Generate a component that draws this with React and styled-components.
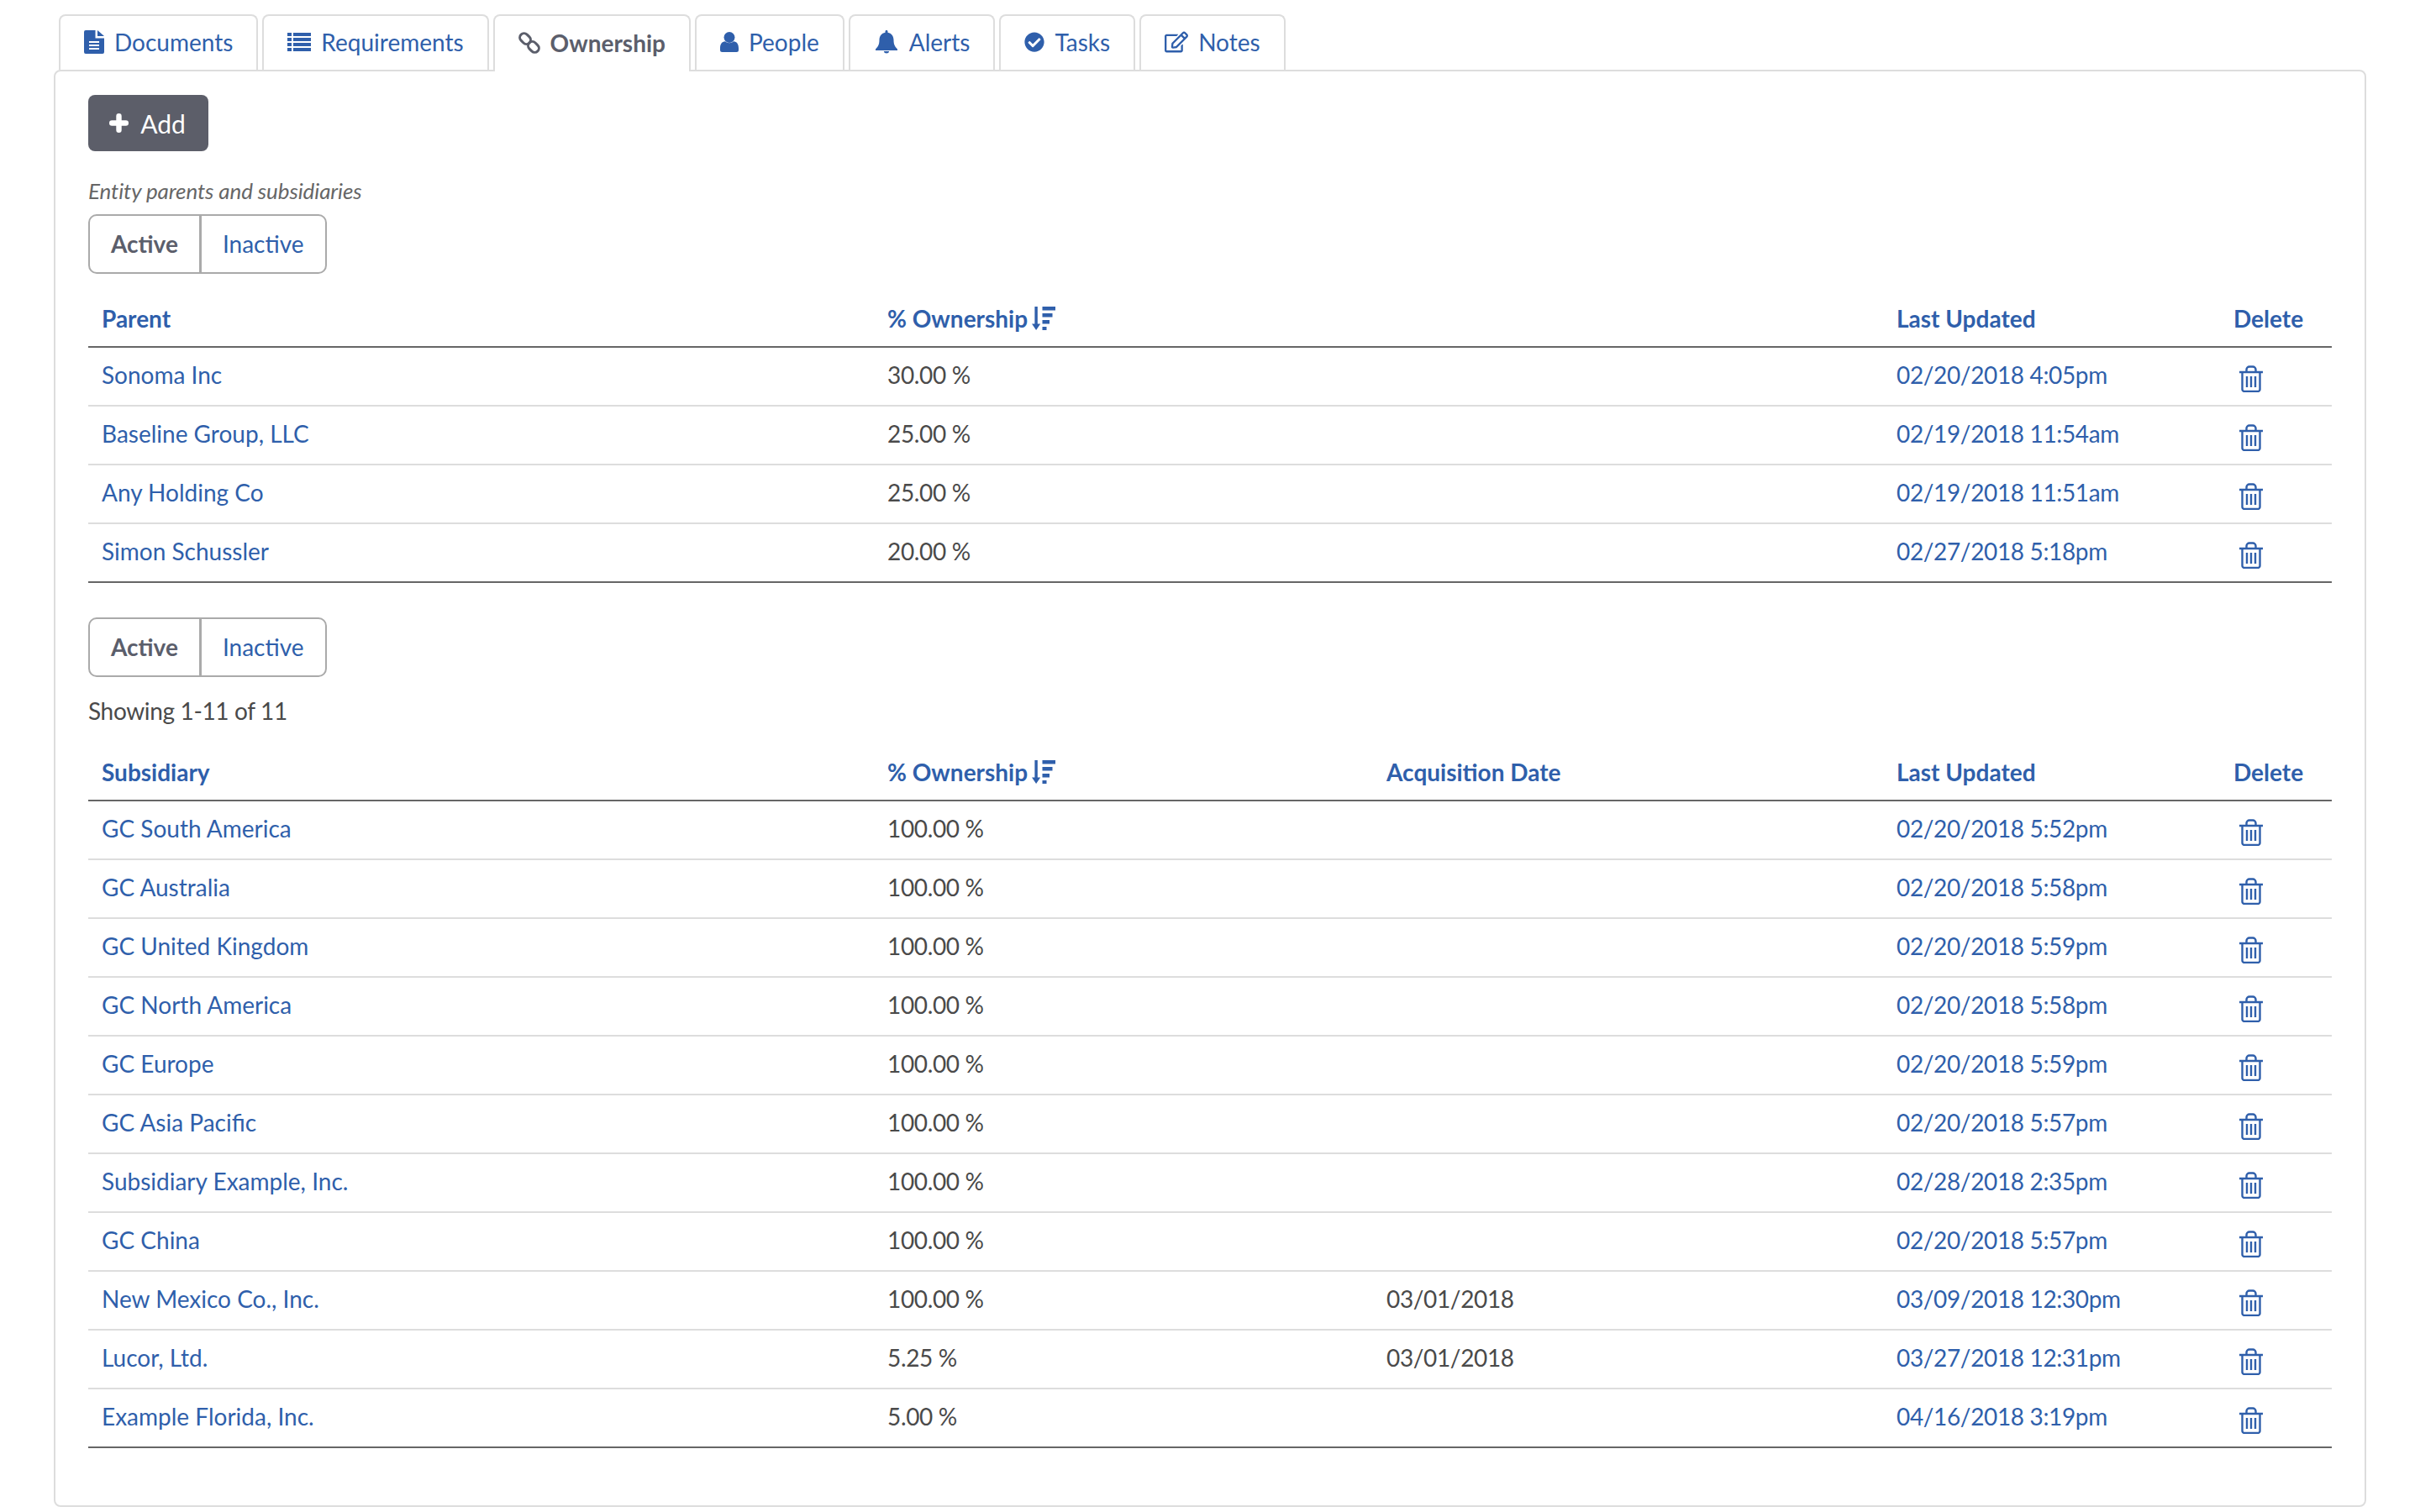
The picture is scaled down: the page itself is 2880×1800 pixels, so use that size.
import React from 'react';
import styled, { createGlobalStyle } from 'styled-components';
import { FaCheckCircle, FaRegEdit } from 'react-icons/fa';

const BLUE = '#2f5fab';
const GREY = '#5b5e6b';
const Global = createGlobalStyle`
  html, body { margin: 0; padding: 0; background: #fff; }
  body { font-family: Lato, "Noto Sans", sans-serif; font-size: 28px; color: #4a4a4a; }
`;
const Page = styled.div`
  width: 2880px; height: 1800px; box-sizing: border-box; padding: 17px 0 0 64px; overflow: hidden;
`;
const TabBar = styled.div`
  display: flex; align-items: flex-start; gap: 5px; padding-left: 6px; height: 66px; position: relative; z-index: 1;
`;
const Tab = styled.div`
  display: flex; align-items: center; gap: 12px; box-sizing: border-box; height: ${p => p.$active ? 68 : 66}px;
  padding: 0 28px 2px; border: 2px solid #ddd; border-bottom: 0;
  border-radius: 8px 8px 0 0; background: #fff; color: ${p => p.$active ? GREY : BLUE};
  font-weight: ${p => p.$active ? 700 : 400}; font-size: 28px;
  svg { display: block; flex: none; }
`;
const Panel = styled.div`
  box-sizing: border-box; width: 2752px; height: 1711px; border: 2px solid #ddd;
  border-radius: 8px; padding: 28px 39px 0 39px;
`;
const AddButton = styled.button`
  display: flex; align-items: center; gap: 14px; box-sizing: border-box; width: 143px; height: 67px;
  justify-content: center; background: #5c5e69; color: #fff; border: 0; border-radius: 8px; padding: 0 2px 0 0;
  font: 400 30px Lato, sans-serif;
`;
const Caption = styled.div`
  font-style: italic; font-size: 26px; letter-spacing: -0.1px; color: #666; line-height: 36px; margin-top: 29px;
`;
const Pills = styled.div`
  display: flex; width: fit-content; box-sizing: border-box; height: 71px; border: 2px solid #aaa; border-radius: 10px; overflow: hidden;
  margin-top: ${p => p.$top}px;
`;
const Pill = styled.div`
  display: flex; align-items: center; padding: 0 25px 2px; font-size: 28px;
  color: ${p => p.$active ? GREY : BLUE}; font-weight: ${p => p.$active ? 700 : 400};
  & + & { border-left: 3px solid #aaa; }
`;
const Showing = styled.div`
  font-size: 28px; letter-spacing: -0.35px; color: #4a4a4a; line-height: 40px; margin-top: 20px;
`;
const Table = styled.table`
  width: 2670px; border-collapse: separate; border-spacing: 0; table-layout: fixed; margin-top: 22px;
`;
const Th = styled.th`
  box-sizing: border-box; height: 66px; padding: 0 16px 2px; text-align: left; font-weight: 700; font-size: 28px; color: ${BLUE};
  border-bottom: 2px solid #666; white-space: nowrap;
`;
const Td = styled.td`
  box-sizing: border-box; height: 70px; padding: 0 16px 4px; font-size: 28px; color: ${p => p.$link ? BLUE : '#4a4a4a'}; white-space: nowrap;
  letter-spacing: ${p => p.$num ? '-0.35px' : 'normal'};
  border-bottom: 2px solid #ddd; tr:last-child > & { border-bottom-color: #666; }
`;
const IconTd = styled(Td)`
  padding: 5px 0 0 23px;
`;
const HeadInner = styled.span`
  display: inline-flex; align-items: center; gap: 5px;
`;
const TrashSvg = styled.svg`display: block;`;
const Trash = () => (
  <TrashSvg viewBox="0 0 28 32" width="28" height="32" fill="none" stroke={BLUE} strokeWidth="2.4">
    <path d="M0 8h28M3.500 8v20.500a2.500 2.500 0 0 0 2.500 2.500h16a2.500 2.500 0 0 0 2.500-2.500V8M8.500 8V5a3.500 3.500 0 0 1 3.500-3.500h4A3.500 3.500 0 0 1 19.500 5v3M9 13v13M14 13v13M19 13v13" />
  </TrashSvg>
);
const SortIcon = () => (
  <svg viewBox="0 0 28 28" width="28" height="28" fill={BLUE}>
    <path d="M3.400 0h3.400v20.500h3.400L5.100 28 0 20.500h3.400z" />
    <rect x="12.5" width="15.5" height="4.5" />
    <rect x="12.5" y="8" width="12" height="4.5" />
    <rect x="12.5" y="16" width="8.5" height="4.5" />
    <rect x="12.5" y="24" width="5" height="4" />
  </svg>
);
const DocIcon = () => (
  <svg viewBox="0 0 24 28" width="24" height="28" fill={BLUE}>
    <path fillRule="evenodd" d="M0 2a2 2 0 0 1 2-2h11.500v9.500H24V26a2 2 0 0 1-2 2H2a2 2 0 0 1-2-2z M6 13v2h12v-2z M6 17v2h12v-2z M6 21v2h12v-2z" />
    <path d="M16 0l8 7h-8z" />
  </svg>
);
const ListIcon = () => (
  <svg viewBox="0 0 28 22" width="28" height="22" fill={BLUE}>
    {[0, 6, 12, 18].map(y => (
      <g key={y}>
        <rect y={y} width="5" height="4" />
        <rect x="7" y={y} width="21" height="4" />
      </g>
    ))}
  </svg>
);
const LinkIcon = () => (
  <svg viewBox="0 0 26 26" width="26" height="26" fill="none" stroke={GREY} strokeWidth="3">
    <g transform="rotate(-45 13 13)">
      <rect x="8" y="-1" width="10" height="14" rx="5" />
      <rect x="8" y="13" width="10" height="14" rx="5" />
    </g>
  </svg>
);
const UserIcon = () => (
  <svg viewBox="0 0 22 24" width="22" height="24" fill={BLUE}>
    <circle cx="11" cy="6.5" r="6.5" />
    <path d="M0 19.500c0-5 2.300-8 6-8.200C7.300 12.500 9 13.300 11 13.300s3.700-.8 5-2c3.700.2 6 3.200 6 8.200v2a2.500 2.500 0 0 1-2.500 2.500h-17A2.500 2.500 0 0 1 0 21.500z" />
  </svg>
);
const BellIcon = () => (
  <svg viewBox="-2 0 30 28" width="30" height="28" fill={BLUE}>
    <path d="M13 0c-1 0-1.500.7-1.500 1.700v1C7 3.600 4.500 7 4.500 11.500c0 6-2 8.500-4.500 11V24h26v-1.500c-2.500-2.500-4.500-5-4.500-11C21.500 7 19 3.600 14.500 2.700v-1C14.500.7 14 0 13 0z" />
    <path d="M9.700 25a3.400 3.400 0 0 0 6.600 0z" />
  </svg>
);
const PlusIcon = () => (
  <svg viewBox="0 0 23 23" width="23" height="23" fill="none" stroke="#fff" strokeWidth="6.4" strokeLinecap="round">
    <path d="M11.500 3.200v16.600M3.200 11.500h16.600" />
  </svg>
);
const CheckIcon = () => <FaCheckCircle size={24} />;
const EditIcon = () => <FaRegEdit size={28} />;

const COLS = [935, 594, 607, 401, 133];
const tabs = [
  [DocIcon, 'Documents'], [ListIcon, 'Requirements'], [LinkIcon, 'Ownership'], [UserIcon, 'People'],
  [BellIcon, 'Alerts'], [CheckIcon, 'Tasks'], [EditIcon, 'Notes'],
];
const parents = [
  ['Sonoma Inc', '30.00 %', '', '02/20/2018 4:05pm'],
  ['Baseline Group, LLC', '25.00 %', '', '02/19/2018 11:54am'],
  ['Any Holding Co', '25.00 %', '', '02/19/2018 11:51am'],
  ['Simon Schussler', '20.00 %', '', '02/27/2018 5:18pm'],
];
const subs = [
  ['GC South America', '100.00 %', '', '02/20/2018 5:52pm'],
  ['GC Australia', '100.00 %', '', '02/20/2018 5:58pm'],
  ['GC United Kingdom', '100.00 %', '', '02/20/2018 5:59pm'],
  ['GC North America', '100.00 %', '', '02/20/2018 5:58pm'],
  ['GC Europe', '100.00 %', '', '02/20/2018 5:59pm'],
  ['GC Asia Pacific', '100.00 %', '', '02/20/2018 5:57pm'],
  ['Subsidiary Example, Inc.', '100.00 %', '', '02/28/2018 2:35pm'],
  ['GC China', '100.00 %', '', '02/20/2018 5:57pm'],
  ['New Mexico Co., Inc.', '100.00 %', '03/01/2018', '03/09/2018 12:30pm'],
  ['Lucor, Ltd.', '5.25 %', '03/01/2018', '03/27/2018 12:31pm'],
  ['Example Florida, Inc.', '5.00 %', '', '04/16/2018 3:19pm'],
];
const DataTable = ({ first, third, rows }) => (
  <Table>
    <colgroup>{COLS.map(w => <col key={w} width={w} />)}</colgroup>
    <thead>
      <tr>
        <Th>{first}</Th>
        <Th><HeadInner>% Ownership <SortIcon /></HeadInner></Th>
        <Th>{third}</Th>
        <Th>Last Updated</Th>
        <Th>Delete</Th>
      </tr>
    </thead>
    <tbody>
      {rows.map(r => (
        <tr key={r[0]}>
          <Td $link>{r[0]}</Td>
          <Td $num>{r[1]}</Td>
          <Td $num>{r[2]}</Td>
          <Td $link $num>{r[3]}</Td>
          <IconTd><Trash /></IconTd>
        </tr>
      ))}
    </tbody>
  </Table>
);
const Toggle = ({ top }) => (
  <Pills $top={top}><Pill $active>Active</Pill><Pill>Inactive</Pill></Pills>
);
export default function App() {
  return (
    <Page>
      <Global />
      <TabBar>
        {tabs.map(([I, t]) => (
          <Tab key={t} $active={t === 'Ownership'}><I />{t}</Tab>
        ))}
      </TabBar>
      <Panel>
        <AddButton><PlusIcon />Add</AddButton>
        <Caption>Entity parents and subsidiaries</Caption>
        <Toggle top={10} />
        <DataTable first="Parent" third="" rows={parents} />
        <Toggle top={41} />
        <Showing>Showing 1-11 of 11</Showing>
        <DataTable first="Subsidiary" third="Acquisition Date" rows={subs} />
      </Panel>
    </Page>
  );
}
